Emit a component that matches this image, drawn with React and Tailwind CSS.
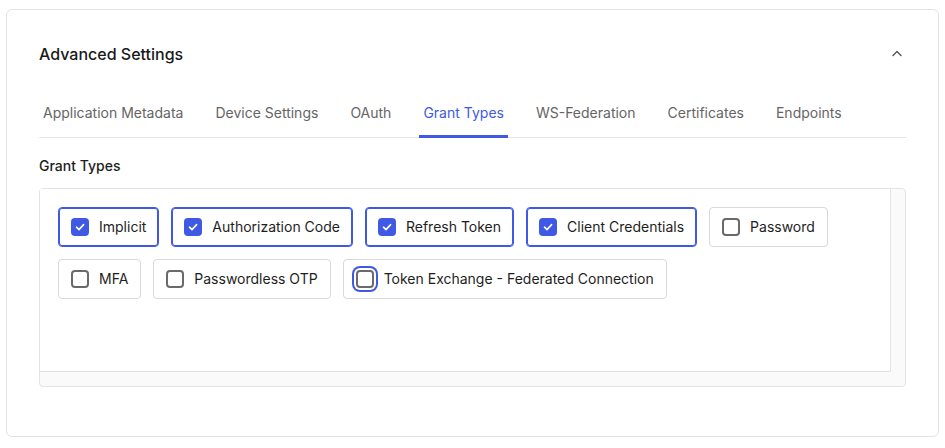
import React, { useState } from 'react';

const TABS = [
  'Application Metadata',
  'Device Settings',
  'OAuth',
  'Grant Types',
  'WS-Federation',
  'Certificates',
  'Endpoints',
];

const GRANTS = [
  { id: 'implicit', label: 'Implicit', checked: true },
  { id: 'auth_code', label: 'Authorization Code', checked: true },
  { id: 'refresh', label: 'Refresh Token', checked: true },
  { id: 'client_creds', label: 'Client Credentials', checked: true },
  { id: 'password', label: 'Password', checked: false },
  { id: 'mfa', label: 'MFA', checked: false },
  { id: 'otp', label: 'Passwordless OTP', checked: false },
  { id: 'token_exchange', label: 'Token Exchange - Federated Connection', checked: false, focused: true },
];

function Checkbox({ checked, focused }) {
  if (checked) {
    return (
      <span className="flex h-[18px] w-[18px] shrink-0 items-center justify-center rounded-[4px] bg-[#3f59e4]">
        <svg width="12" height="12" viewBox="0 0 12 12" fill="none">
          <polyline points="2.5 6.2 5 8.6 9.6 3.6" stroke="white" strokeWidth="1.6" strokeLinecap="round" strokeLinejoin="round" />
        </svg>
      </span>
    );
  }
  return (
    <span
      className={`h-[18px] w-[18px] shrink-0 rounded-[4px] border-2 border-[#6a6a6a] bg-white ${focused ? 'ring-2 ring-[#3f59e4] ring-offset-2' : ''}`}
    />
  );
}

function GrantChip({ grant }) {
  return (
    <label
      className={`flex h-10 cursor-pointer items-center gap-[10px] rounded-[4px] border bg-white px-3 text-sm text-[#1e1e1e] ${
        grant.checked ? 'border-[#3f59e4] shadow-[inset_0_0_0_1px_#3f59e4]' : 'border-[#d9d9d9]'
      }`}
    >
      <Checkbox checked={grant.checked} focused={grant.focused} />
      <span>{grant.label}</span>
    </label>
  );
}

export default function App() {
  const [tab, setTab] = useState('Grant Types');

  return (
    <div className="min-h-[448px] bg-white pl-[6px] pr-[6px] pt-[9px] font-['Inter','Noto_Sans',sans-serif]">
      <div className="h-[428px] rounded-[6px] border border-[#e3e3e3] px-8 pt-8">
        <div className="flex items-center justify-between">
          <h2 className="text-base leading-6 font-medium text-[#1a1a1a]">Advanced Settings</h2>
          <svg width="10" height="7" viewBox="0 0 10 7" fill="none" className="mr-[4px] mb-[2px]">
            <polyline points="1 5.5 5 1.5 9 5.5" stroke="#555" strokeWidth="1.4" strokeLinecap="round" strokeLinejoin="round" />
          </svg>
        </div>

        <div className="mt-[26px] flex gap-6 border-b border-[#e5e5e5]">
          {TABS.map(t => (
            <button
              key={t}
              onClick={() => setTab(t)}
              className={`-mb-px border-b-[3px] px-1 pt-[11px] pb-[12px] text-sm leading-5 ${
                tab === t ? 'border-[#3f59e4] text-[#3f59e4]' : 'border-transparent text-[#656565]'
              }`}
            >
              {t}
            </button>
          ))}
        </div>

        <div className="mt-[18px] text-sm leading-5 font-medium text-[#1e1e1e]">Grant Types</div>

        <div className="mt-[12px] flex h-[199px] flex-col rounded-[4px] border border-[#e3e3e3] bg-[#fafafa]">
          <div className="flex flex-1">
            <div className="flex flex-1 flex-col gap-[12px] border-r border-b border-[#e3e3e3] bg-white p-[18px]">
              <div className="flex gap-3">
                {GRANTS.slice(0, 5).map(g => (
                  <GrantChip key={g.id} grant={g} />
                ))}
              </div>
              <div className="flex gap-3">
                {GRANTS.slice(5).map(g => (
                  <GrantChip key={g.id} grant={g} />
                ))}
              </div>
            </div>
            <div className="w-[14px]" />
          </div>
          <div className="h-[14px]" />
        </div>
      </div>
    </div>
  );
}
